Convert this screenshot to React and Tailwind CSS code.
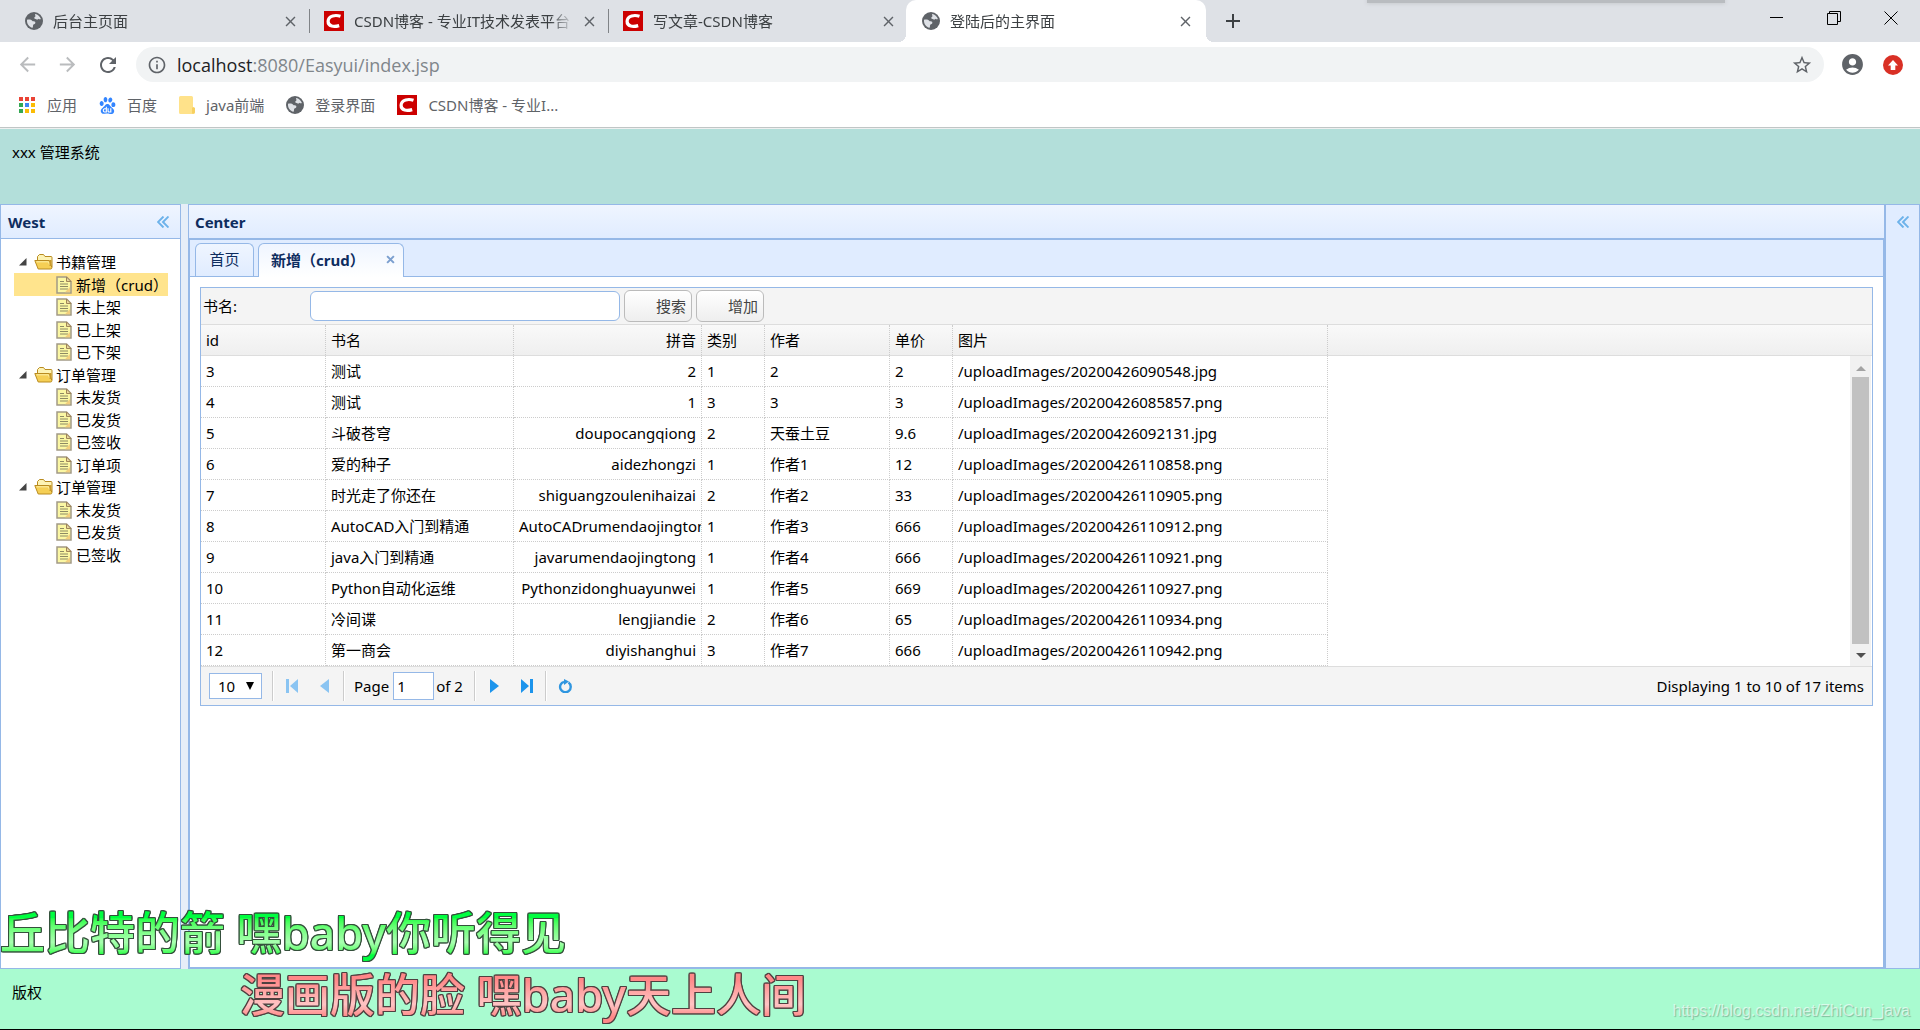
import { useState } from 'react'
import { SiBaidu } from 'react-icons/si'
import {
  MdAccountCircle,
  MdAdd,
  MdArrowBack,
  MdArrowForward,
  MdClose,
  MdInfoOutline,
  MdRefresh,
  MdStarBorder,
} from 'react-icons/md'

const browserTabs = [
  { title: '后台主页面', icon: 'globe' },
  { title: 'CSDN博客 - 专业IT技术发表平台', icon: 'csdn' },
  { title: '写文章-CSDN博客', icon: 'csdn' },
  { title: '登陆后的主界面', icon: 'globe', active: true },
]

const treeRows = [
  { text: '书籍管理', folder: true },
  { text: '新增（crud）', selected: true },
  { text: '未上架' },
  { text: '已上架' },
  { text: '已下架' },
  { text: '订单管理', folder: true },
  { text: '未发货' },
  { text: '已发货' },
  { text: '已签收' },
  { text: '订单项' },
  { text: '订单管理', folder: true },
  { text: '未发货' },
  { text: '已发货' },
  { text: '已签收' },
]

const columns = [
  { key: 'id', title: 'id', width: 'w-[125px]' },
  { key: 'name', title: '书名', width: 'w-[188px]' },
  { key: 'pinyin', title: '拼音', width: 'w-[188px]', right: true },
  { key: 'cid', title: '类别', width: 'w-[63px]' },
  { key: 'author', title: '作者', width: 'w-[125px]' },
  { key: 'price', title: '单价', width: 'w-[63px]' },
  { key: 'image', title: '图片', width: 'w-[375px]' },
]

const books = [
  { id: 3, name: '测试', pinyin: '2', cid: 1, author: '2', price: '2', image: '/uploadImages/20200426090548.jpg' },
  { id: 4, name: '测试', pinyin: '1', cid: 3, author: '3', price: '3', image: '/uploadImages/20200426085857.png' },
  { id: 5, name: '斗破苍穹', pinyin: 'doupocangqiong', cid: 2, author: '天蚕土豆', price: '9.6', image: '/uploadImages/20200426092131.jpg' },
  { id: 6, name: '爱的种子', pinyin: 'aidezhongzi', cid: 1, author: '作者1', price: '12', image: '/uploadImages/20200426110858.png' },
  { id: 7, name: '时光走了你还在', pinyin: 'shiguangzoulenihaizai', cid: 2, author: '作者2', price: '33', image: '/uploadImages/20200426110905.png' },
  { id: 8, name: 'AutoCAD入门到精通', pinyin: 'AutoCADrumendaojingtong', cid: 1, author: '作者3', price: '666', image: '/uploadImages/20200426110912.png' },
  { id: 9, name: 'java入门到精通', pinyin: 'javarumendaojingtong', cid: 1, author: '作者4', price: '666', image: '/uploadImages/20200426110921.png' },
  { id: 10, name: 'Python自动化运维', pinyin: 'Pythonzidonghuayunwei', cid: 1, author: '作者5', price: '669', image: '/uploadImages/20200426110927.png' },
  { id: 11, name: '冷间谍', pinyin: 'lengjiandie', cid: 2, author: '作者6', price: '65', image: '/uploadImages/20200426110934.png' },
  { id: 12, name: '第一商会', pinyin: 'diyishanghui', cid: 3, author: '作者7', price: '666', image: '/uploadImages/20200426110942.png' },
]

function GlobeIcon() {
  return (
    <svg viewBox="0 0 18 18" className="size-[18px] shrink-0">
      <circle cx="9" cy="9" r="9" fill="#5f6368" />
      <path d="M10.2 1.9c2.6.5 4.900 2.200 5.700 5.100-.9.700-1.700.300-2.400-.3-.5.900-1.500 1-2.300.6-.8-.4-1.900-.2-2-1.200-.1-1.100 1.400-1.100 1.300-2.100 0-.7-.9-1.100-.3-2.100z" fill="#dee1e6" />
      <path d="M2 7.800c2.300-.4 4.300-.2 5.200 1 .5.700 1.500.500 2.300.7 1 .3 1.100 1.400.6 2.100-.6.800-1.700.7-2 1.700-.3.900.1 1.700-.6 2.500C4.200 15.300 1.600 11.900 2 7.800z" fill="#dee1e6" />
    </svg>
  )
}

function CsdnIcon() {
  return (
    <svg viewBox="0 0 20 20" className="size-5 shrink-0">
      <path fill="#c00" d="M0 0h20v20H0z" />
      <path d="M16.500 5.300C12 3.800 4.300 4.200 4.100 10.300c-.1 5.400 6 5.800 11.100 4.300" fill="none" stroke="#fff" strokeWidth="3.200" />
    </svg>
  )
}

function AppsIcon() {
  const colors = ['#ea4335', '#ea4335', '#ea4335', '#34a853', '#4285f4', '#fbbc05', '#34a853', '#fbbc05', '#fbbc05']
  return (
    <svg viewBox="0 0 17 17" className="size-[17px] shrink-0">
      {colors.map((c, i) => (
        <rect key={i} x={(i % 3) * 6} y={Math.floor(i / 3) * 6} width="4" height="4" fill={c} />
      ))}
    </svg>
  )
}

function BookmarkFolderIcon() {
  return (
    <svg viewBox="0 0 16 18" className="h-[18px] w-4 shrink-0">
      <path d="M1.500 0h11a1.500 1.500 0 0 1 1.500 1.500V11l2 1v4.500a1.500 1.500 0 0 1-1.500 1.500h-13A1.500 1.500 0 0 1 0 16.500v-15A1.500 1.500 0 0 1 1.500 0z" fill="#ffe28a" />
      <path d="M13 17.500V12l1-1 2 1v4.500l-1.500 1.200z" fill="#f7d060" />
    </svg>
  )
}

function FolderIcon() {
  return (
    <svg viewBox="0 0 20 18" className="h-[18px] w-5 shrink-0">
      <path d="M3.500 9V3.500L5.500 1.500h4l1.500 2h6c.8 0 1 .5 1 1V14" fill="#fdf3b4" stroke="#b98b20" />
      <path d="M.8 7.500h14.500l2.700 7.300c-.2.800-.7 1.200-1.500 1.200H4.200z" fill="#f5cf55" stroke="#b98b20" />
      <path d="M2.500 8.800h12l1 3" fill="none" stroke="#fdf0a8" />
      <path d="M16.500 7v6" stroke="#c99a2c" strokeWidth="2" />
    </svg>
  )
}

function FileIcon() {
  return (
    <svg viewBox="0 0 16 18" className="h-[18px] w-4 shrink-0">
      <path d="M1 1h9.500L15 5.500V17H1z" fill="#fbf7a3" stroke="#a39a86" strokeWidth="1.500" />
      <path d="M10.500 1v4.500H15z" fill="#e6d9a0" stroke="#a08458" />
      <path d="M4 5.500h4M4 8h8M4 10.500h8M4 13h8" stroke="#8d8a64" />
      <path d="M14 11v5.200H9z" fill="#f3cf7d" />
    </svg>
  )
}

function DoubleChevron() {
  return (
    <svg viewBox="0 0 12 12" className="size-3 shrink-0">
      <path d="M6.500.5 1 6l5.500 5.500M11.500.5 6 6l5.500 5.500" fill="none" stroke="#6cb2ea" strokeWidth="1.900" />
    </svg>
  )
}

function BrowserTab({ tab, last }) {
  return (
    <div
      className={
        tab.active
          ? 'relative -ml-[2px] flex w-[300px] items-center rounded-t-[10px] bg-white pr-3 pl-4'
          : 'flex w-[299px] items-center pl-[14px]'
      }
    >
      {tab.active && (
        <>
          <span className="absolute bottom-0 -left-2 size-2 bg-[radial-gradient(circle_at_0_0,transparent_8px,white_8px)]" />
          <span className="absolute -right-2 bottom-0 size-2 bg-[radial-gradient(circle_at_100%_0,transparent_8px,white_8px)]" />
        </>
      )}
      {tab.icon === 'globe' ? <GlobeIcon /> : <CsdnIcon />}
      <span className="ml-[10px] flex-1 overflow-hidden text-[15px] leading-[20px] whitespace-nowrap text-[#3c4043] [mask-image:linear-gradient(to_right,black_calc(100%-24px),transparent)]">
        {tab.title}
      </span>
      <button type="button" aria-label="关闭" className="ml-[6px] flex size-[18px] items-center justify-center text-[#5f6368]">
        <MdClose className="size-[17px]" />
      </button>
      {!tab.active && <span className={last ? 'ml-[10px] h-6 w-px' : 'ml-[10px] h-6 w-px bg-[#808387]'} />}
    </div>
  )
}

function BrowserChrome() {
  return (
    <header className="bg-white">
      <div className="relative flex h-[42px] bg-[#dee1e6] pl-[11px]">
        <div className="absolute top-0 right-[195px] h-[3px] w-[358px] bg-[#b9bcc0] shadow-[0_0_4px_#b9bcc0]" />
        {browserTabs.map((tab, i) => (
          <BrowserTab key={tab.title} tab={tab} last={i === 2} />
        ))}
        <button type="button" aria-label="新标签页" className="ml-[15px] flex w-6 items-center justify-center text-[#3c4043]">
          <MdAdd className="size-6 shrink-0" />
        </button>
        <div className="ml-auto flex h-9 items-center gap-[43px] pr-[22px] text-black">
          <button type="button" aria-label="最小化">
            <svg viewBox="0 0 14 14" className="size-[14px]"><path d="M0 6.500h13" stroke="currentColor" /></svg>
          </button>
          <button type="button" aria-label="还原">
            <svg viewBox="0 0 14 14" className="size-[14px]">
              <path d="M.5 2.500h10v11H.5zM2.500 2.500v-2h11v10h-3" fill="none" stroke="currentColor" />
            </svg>
          </button>
          <button type="button" aria-label="关闭窗口">
            <svg viewBox="0 0 14 14" className="size-[14px]"><path d="m.5.5 13 13m0-13-13 13" stroke="currentColor" /></svg>
          </button>
        </div>
      </div>

      <div className="flex h-[45px] items-center pr-[17px] pl-4 text-[#5f6368]">
        <button type="button" aria-label="后退" className="text-[#babcbe]"><MdArrowBack className="size-[23px]" /></button>
        <button type="button" aria-label="前进" className="ml-[17px] text-[#babcbe]"><MdArrowForward className="size-[23px]" /></button>
        <button type="button" aria-label="刷新" className="ml-[17px]"><MdRefresh className="size-6" /></button>
        <div className="ml-4 flex h-[35px] flex-1 items-center rounded-full bg-[#f1f3f4] pr-[11px] pl-[11px]">
          <MdInfoOutline className="size-5" />
          <div role="textbox" aria-label="地址" className="ml-[10px] flex-1 font-['Open_Sans',sans-serif] text-[18px] leading-[24px] text-[#80868b]">
            <span className="text-[#202124]">localhost</span>:8080/Easyui/index.jsp
          </div>
          <button type="button" aria-label="收藏"><MdStarBorder className="size-[22px]" /></button>
        </div>
        <button type="button" aria-label="用户" className="ml-4"><MdAccountCircle className="size-[25px]" /></button>
        <button type="button" aria-label="更新" className="ml-[18px]">
          <svg viewBox="0 0 20 20" className="size-5">
            <circle cx="10" cy="10" r="10" fill="#d93025" />
            <path d="M10 5l5 5.500h-2.700V15H7.700v-4.500H5z" fill="#fff" />
          </svg>
        </button>
      </div>

      <nav className="flex h-[41px] items-center gap-[22px] border-b border-[#c0c6c6] pb-1 pl-[19px] text-[15px] leading-[20px] text-[#5f6368]">
        <a href="#apps" className="flex items-center gap-[11px]"><AppsIcon />应用</a>
        <a href="#baidu" className="flex items-center gap-[11px]"><SiBaidu className="size-[17px] text-[#3385ff]" />百度</a>
        <a href="#java" className="flex items-center gap-[11px]"><BookmarkFolderIcon />java前端</a>
        <a href="#login" className="flex items-center gap-[11px]"><GlobeIcon />登录界面</a>
        <a href="#csdn" className="flex items-center gap-[11px]"><CsdnIcon />CSDN博客 - 专业I...</a>
      </nav>
      <div className="h-px bg-[#eef0f0]" />
    </header>
  )
}

function WestPanel() {
  return (
    <aside className="flex w-[181px] flex-col border border-[#95b8e7] bg-white">
      <div className="flex h-[34px] items-center justify-between border-b border-[#95b8e7] bg-linear-to-b from-[#eff5ff] to-[#e0ecff] pr-[11px] pl-[7px]">
        <h2 className="text-[15px] leading-[20px] font-bold text-[#0e2d5f]">West</h2>
        <button type="button" aria-label="折叠"><DoubleChevron /></button>
      </div>
      <ul className="pt-3 pr-3 pl-[13px] text-[15px] leading-[22px] text-black">
        {treeRows.map((row, i) => (
          <li
            key={i}
            className={
              row.selected
                ? 'flex h-[23px] items-center bg-[#ffe48d] pl-[42px] whitespace-nowrap'
                : row.folder
                  ? 'flex items-center pl-[5px] odd:h-[22px] even:h-[23px]'
                  : 'flex items-center pl-[42px] odd:h-[22px] even:h-[23px]'
            }
          >
            {row.folder ? (
              <>
                <svg viewBox="0 0 8 8" className="mr-[7px] size-2"><path d="M7.500 0v7.500H0z" fill="#444" /></svg>
                <FolderIcon />
                <span className="ml-[2px]">{row.text}</span>
              </>
            ) : (
              <>
                <FileIcon />
                <span className="ml-1">{row.text}</span>
              </>
            )}
          </li>
        ))}
      </ul>
    </aside>
  )
}

function GridColumns() {
  return (
    <colgroup>
      {columns.map(col => (
        <col key={col.key} className={col.width} />
      ))}
    </colgroup>
  )
}

function PagerSeparator() {
  return <span className="h-[30px] w-[2px] border-r border-l border-r-white border-l-[#ccc]" />
}

function Pager() {
  const [size, setSize] = useState('10')
  const [page, setPage] = useState('1')

  return (
    <div className="flex h-[39px] items-center border-t border-[#ddd] bg-[#f4f4f4] pr-2 pl-2 text-[15px] leading-[20px]">
      <div className="relative">
        <select
          aria-label="每页条数"
          value={size}
          onChange={e => setSize(e.target.value)}
          className="block h-[26px] w-[53px] appearance-none border border-[#95b8e7] bg-white pl-2"
        >
          <option>10</option>
          <option>20</option>
          <option>30</option>
        </select>
        <svg viewBox="0 0 8 8" className="pointer-events-none absolute top-[9px] right-2 size-2"><path d="M0 0h8L4 8z" /></svg>
      </div>
      <div className="ml-[10px] flex items-center">
        <PagerSeparator />
        <button type="button" aria-label="首页" className="ml-3">
          <svg viewBox="0 0 12 14" className="h-[14px] w-3" fill="#8ac4f2"><path d="M0 0h3v14H0zM12 0v14L4 7z" /></svg>
        </button>
        <button type="button" aria-label="上一页" className="ml-[22px]">
          <svg viewBox="0 0 9 14" className="h-[14px] w-[9px]" fill="#8ac4f2"><path d="M9 0v14L0 7z" /></svg>
        </button>
        <span className="w-[14px]" />
        <PagerSeparator />
      </div>
      <label htmlFor="page" className="ml-[9px]">Page</label>
      <input
        id="page"
        value={page}
        onChange={e => setPage(e.target.value)}
        className="ml-1 h-7 w-[41px] border border-[#95b8e7] bg-white px-[3px]"
      />
      <span className="ml-[2px]">of 2</span>
      <div className="ml-[11px] flex items-center">
        <PagerSeparator />
        <button type="button" aria-label="下一页" className="ml-[14px]">
          <svg viewBox="0 0 9 14" className="h-[14px] w-[9px]" fill="#1c94ec"><path d="M0 0v14l9-7z" /></svg>
        </button>
        <button type="button" aria-label="末页" className="ml-[22px]">
          <svg viewBox="0 0 12 14" className="h-[14px] w-3" fill="#1c94ec"><path d="M9 0h3v14H9zM0 0v14l8-7z" /></svg>
        </button>
        <span className="w-[12px]" />
        <PagerSeparator />
        <button type="button" aria-label="重新加载" className="ml-[11px]">
          <svg viewBox="0 0 14 14" className="size-[14px]">
            <path d="M10.500 3.600A5.300 5.300 0 1 1 6 2.800" fill="none" stroke="#2f96e0" strokeWidth="2.400" />
            <path d="M6 0l5 2.600L6 6z" fill="#2f96e0" />
          </svg>
        </button>
      </div>
      <span className="ml-auto">Displaying 1 to 10 of 17 items</span>
    </div>
  )
}

function DataGrid() {
  const [keyword, setKeyword] = useState('')
  const buttonClass =
    'h-8 w-[68px] rounded-[6px] border border-[#bbb] bg-linear-to-b from-white to-[#eee] pr-[5px] text-right text-[#444]'

  return (
    <section className="border border-[#95b8e7] text-[15px] leading-[20px] text-black">
      <form
        onSubmit={e => e.preventDefault()}
        className="flex h-[37px] items-center gap-1 border-b border-[#ddd] bg-[#f4f4f4] pl-[2px]"
      >
        <label htmlFor="bookName" className="w-[103px]">书名:</label>
        <input
          id="bookName"
          value={keyword}
          onChange={e => setKeyword(e.target.value)}
          className="h-[30px] w-[310px] rounded-[6px] border border-[#95b8e7] bg-white px-1"
        />
        <button type="submit" className={buttonClass}>搜索</button>
        <button type="button" className={buttonClass}>增加</button>
      </form>

      <div className="border-b border-[#ddd] bg-linear-to-b from-[#f9f9f9] to-[#efefef]">
        <table className="w-[1127px] table-fixed border-separate border-spacing-0">
          <GridColumns />
          <thead>
            <tr className="h-[30px]">
              {columns.map(col => (
                <th
                  key={col.key}
                  scope="col"
                  className={
                    col.right
                      ? 'border-r border-dotted border-[#ccc] px-[5px] text-right font-normal'
                      : 'border-r border-dotted border-[#ccc] px-[5px] text-left font-normal'
                  }
                >
                  {col.title}
                </th>
              ))}
            </tr>
          </thead>
        </table>
      </div>

      <div className="flex justify-between bg-white">
        <table className="w-[1127px] table-fixed border-separate border-spacing-0">
          <GridColumns />
          <tbody>
            {books.map(book => (
              <tr key={book.id} className="h-[31px]">
                {columns.map(col => (
                  <td
                    key={col.key}
                    className={
                      col.right
                        ? 'overflow-hidden border-r border-b border-dotted border-[#ccc] px-[5px] text-right whitespace-nowrap'
                        : 'overflow-hidden border-r border-b border-dotted border-[#ccc] px-[5px] whitespace-nowrap'
                    }
                  >
                    {book[col.key]}
                  </td>
                ))}
              </tr>
            ))}
          </tbody>
        </table>
        {/* scroll bar */}
        <div className="mr-px flex w-[21px] flex-col items-center bg-[#f1f1f1]">
          <div className="flex h-[21px] items-center pt-1">
            <svg viewBox="0 0 10 5" className="h-[5px] w-[10px]"><path d="M5 0l5 5H0z" fill="#a3a3a3" /></svg>
          </div>
          <div className="w-[17px] flex-1 bg-[#c1c1c1]" />
          <div className="flex h-[22px] items-center">
            <svg viewBox="0 0 10 5" className="h-[5px] w-[10px]"><path d="M0 0h10L5 5z" fill="#505050" /></svg>
          </div>
        </div>
      </div>

      <Pager />
    </section>
  )
}

function CenterPanel() {
  return (
    <main className="flex min-w-0 flex-1 flex-col border border-[#95b8e7] bg-white">
      <div className="flex h-[34px] items-center border-b border-[#95b8e7] bg-linear-to-b from-[#eff5ff] to-[#e0ecff] pl-[6px]">
        <h2 className="text-[15px] leading-[20px] font-bold text-[#0e2d5f]">Center</h2>
      </div>
      <div className="flex flex-1 flex-col border border-[#95b8e7]">
        <div className="flex h-[37px] items-end gap-1 border-b border-[#95b8e7] bg-[#e0ecff] pl-[5px] text-[15px] leading-[20px] text-[#0e2d5f]">
          <button type="button" className="h-[33px] w-[59px] rounded-t-[6px] border border-b-0 border-[#95b8e7] bg-linear-to-b from-[#eff5ff] to-[#e0ecff] pb-[2px]">
            首页
          </button>
          <div className="-mb-px flex h-[34px] w-[146px] items-center justify-between rounded-t-[6px] border border-b-0 border-[#95b8e7] bg-linear-to-b from-[#eff5ff] to-white pr-2 pb-[2px] pl-3">
            <button type="button" className="font-bold whitespace-nowrap">新增（crud）</button>
            <button type="button" aria-label="关闭标签">
              <svg viewBox="0 0 8 8" className="size-[9px]"><path d="M1 1l6 6M7 1L1 7" stroke="#7b9fcf" strokeWidth="1.800" /></svg>
            </button>
          </div>
        </div>
        <div className="p-[10px]">
          <DataGrid />
        </div>
      </div>
    </main>
  )
}

function Lyrics() {
  const lineClass = 'bg-clip-text pr-2 text-[45px] leading-[62px] font-medium whitespace-pre text-transparent'
  // four one-pixel shadows make the outline round the gradient text
  return (
    <div className="pointer-events-none absolute bottom-1 left-0">
      <div className="w-max [filter:drop-shadow(1px_0_0_#34503b)_drop-shadow(-1px_0_0_#34503b)_drop-shadow(0_1px_0_#34503b)_drop-shadow(0_-1px_0_#34503b)]">
        <p className={`${lineClass} bg-linear-to-b from-[#00ff40] from-25% via-[#a8ffb0] via-65% to-[#00ff40] to-85%`}>
          丘比特的箭 嘿baby你听得见
        </p>
      </div>
      <div className="ml-60 w-max [filter:drop-shadow(1px_0_0_#504040)_drop-shadow(-1px_0_0_#504040)_drop-shadow(0_1px_0_#504040)_drop-shadow(0_-1px_0_#504040)]">
        <p className={`${lineClass} bg-linear-to-b from-[#ff8888] from-25% via-[#ffc4c4] via-65% to-[#ff8888] to-85%`}>
          漫画版的脸 嘿baby天上人间
        </p>
      </div>
    </div>
  )
}

export default function App() {
  return (
    <div className="relative flex min-h-screen flex-col overflow-hidden bg-white font-['Noto_Sans','Noto_Sans_CJK_SC',sans-serif]">
      <BrowserChrome />
      <div className="h-[75px] bg-[#b3dfda] px-3 pt-[13px] text-[15px] leading-[20px] text-black">xxx 管理系统</div>
      <div className="flex flex-1">
        <WestPanel />
        <div className="w-[7px] bg-[#e6eef8]" />
        <CenterPanel />
        <aside className="w-[35px] border border-[#95b8e7] bg-[#e0ecff] pt-[11px] pl-[11px]">
          <button type="button" aria-label="展开" className="block"><DoubleChevron /></button>
        </aside>
      </div>
      <footer className="flex h-[61px] justify-between border-b border-black bg-[#a9fbd0] pr-[10px] pl-3 text-black">
        <span className="pt-[13px] text-[15px] leading-[20px]">版权</span>
        <span className="self-end pb-2 font-['Liberation_Sans',sans-serif] text-[16px] leading-[20px] text-white/60 [text-shadow:1px_1px_1px_rgb(0_0_0/0.25)]">
          https://blog.csdn.net/ZhiCun_java
        </span>
      </footer>
      <Lyrics />
    </div>
  )
}
